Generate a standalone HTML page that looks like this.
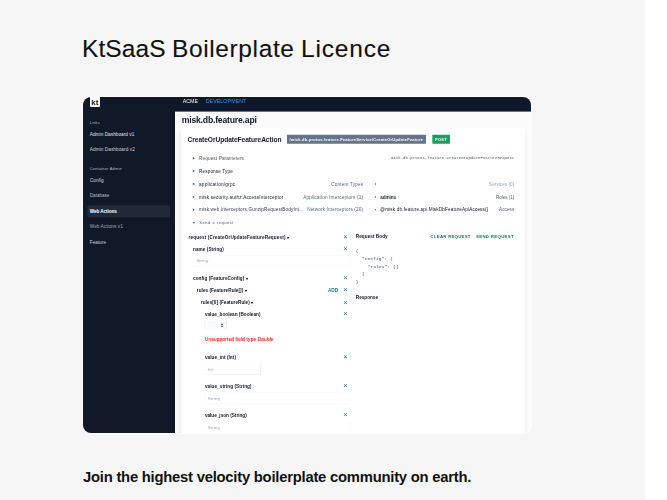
<!DOCTYPE html>
<html><head><meta charset="utf-8"><title>KtSaaS Boilerplate Licence</title>
<style>
html,body{margin:0;padding:0;background:#fff;}
body{width:667px;height:500px;overflow:hidden;position:relative;font-family:"Liberation Sans",sans-serif;}
.page{position:absolute;left:0;top:0;width:645px;height:500px;background:#f6f6f6;}
h1 span{position:absolute;top:0}
h1{position:absolute;left:0;top:33px;width:600px;height:32px;margin:0;font-size:24.5px;line-height:32px;font-weight:400;color:#111;white-space:nowrap;-webkit-text-stroke:0.12px #111;}
h2{position:absolute;left:83px;top:467px;margin:0;font-size:14.8px;line-height:20px;font-weight:700;color:#111;white-space:nowrap;letter-spacing:-0.23px;}
.shot{position:absolute;left:83px;top:97px;width:448px;height:336px;border-radius:8px;overflow:hidden;background:#fbfbfc;box-shadow:0 0 0 1px rgba(255,255,255,.75);}
.in{position:absolute;left:0;top:0;width:1344px;height:1008px;transform:scale(0.333333);transform-origin:0 0;}
.in *{position:absolute;box-sizing:border-box;}
.t{white-space:pre;line-height:20px;height:20px;}
.m{font-family:"Liberation Mono",monospace;}
.side{left:0;top:0;width:276px;height:1008px;background:#111827;}
.top{left:276px;top:0;width:1068px;height:42px;background:#111827;}
.bl{left:276px;top:42px;width:1068px;height:3px;background:#2f7df6;}
.logo{left:21px;top:-4px;width:30px;height:34px;background:#fff;border-radius:3px;}
.sel{left:13px;top:324px;width:248px;height:37px;border-radius:7px;background:#1f2937;}
.card{left:293px;top:93px;width:1033px;height:940px;background:#fff;border-radius:8px;box-shadow:0 10px 15px -3px rgba(0,0,0,.13),0 4px 6px -4px rgba(0,0,0,.1),0 0 2px rgba(0,0,0,.04);}
.bdg{border-radius:2px;}
.inp{background:#fff;border:1.5px solid #f2f3f5;border-bottom-color:#e0e2e7;border-radius:4px;box-shadow:0 1px 2px rgba(0,0,0,.04);}
</style></head><body>
<div class="page">
<h1><span style="left:82px;letter-spacing:0.1px">KtSaaS</span><span style="left:172px;letter-spacing:0.62px">Boilerplate</span><span style="left:301px;letter-spacing:0.83px">Licence</span></h1>
<div class="shot"><div class="in">
<div class="side"></div><div class="top"></div><div class="bl"></div>
<div class="logo"></div>
<div class="t" style="left:24.5px;top:4px;font:700 23px/24px 'Liberation Sans',sans-serif;color:#111;letter-spacing:1.3px">kt</div>
<div class="sel"></div>
<div class="card"></div>
<div class="bdg" style="left:611.7px;top:113.4px;width:417px;height:26.4px;background:#64748b"></div>
<div class="bdg" style="left:1047.6px;top:113.4px;width:53.7px;height:26.4px;background:#1a9e62"></div>
<div class="inp" style="left:330px;top:474.9px;width:473.4px;height:33.3px;"></div>
<div class="inp" style="left:363.6px;top:671.1px;width:67.2px;height:26.4px;background:#f8fafc;border-color:#e6e9ee;border-right:2px solid #c9ced6;"></div>
<div class="inp" style="left:363.9px;top:798.6px;width:168.9px;height:34.5px;border-right:2px solid #c9ced6;"></div>
<div class="inp" style="left:363.9px;top:886.2px;width:439.5px;height:34.8px;"></div>
<div class="inp" style="left:363.9px;top:973.8px;width:439.5px;height:43.2px;border-top-color:#cfd3d9;"></div>
<svg style="left:413px;top:677.9px" width="8" height="14" viewBox="0 0 8 14"><path d="M0.5 5.5 L4 1 L7.5 5.5 Z M0.5 8.5 L4 13 L7.5 8.5 Z" fill="#1f2937"/></svg>
<svg style="left:327.5px;top:178.6px" width="8" height="10" viewBox="0 0 8 10"><path d="M1 0.5 L7 5 L1 9.5 Z" fill="#3d5a80"/></svg>
<svg style="left:327.5px;top:217px" width="8" height="10" viewBox="0 0 8 10"><path d="M1 0.5 L7 5 L1 9.5 Z" fill="#3d5a80"/></svg>
<svg style="left:327.5px;top:256px" width="8" height="10" viewBox="0 0 8 10"><path d="M1 0.5 L7 5 L1 9.5 Z" fill="#3d5a80"/></svg>
<svg style="left:327.5px;top:295px" width="8" height="10" viewBox="0 0 8 10"><path d="M1 0.5 L7 5 L1 9.5 Z" fill="#3d5a80"/></svg>
<svg style="left:327.5px;top:333.4px" width="8" height="10" viewBox="0 0 8 10"><path d="M1 0.5 L7 5 L1 9.5 Z" fill="#3d5a80"/></svg>
<svg style="left:327.5px;top:374.6px" width="9" height="6" viewBox="0 0 9 6"><path d="M0.5 0.5 L8.5 0.5 L4.5 5.5 Z" fill="#3d5a80"/></svg>
<svg style="left:874.8px;top:257px" width="6" height="8" viewBox="0 0 6 8"><path d="M0.5 0.5 L5.5 4 L0.5 7.5 Z" fill="#5b7090"/></svg>
<svg style="left:874.8px;top:296px" width="6" height="8" viewBox="0 0 6 8"><path d="M0.5 0.5 L5.5 4 L0.5 7.5 Z" fill="#5b7090"/></svg>
<svg style="left:874.8px;top:334.4px" width="6" height="8" viewBox="0 0 6 8"><path d="M0.5 0.5 L5.5 4 L0.5 7.5 Z" fill="#5b7090"/></svg>
<div class="t" style="left:20.4px;top:66.8px;font-size:12px;color:#b4bac4;letter-spacing:0.46px;">Links</div>
<div class="t" style="left:20.4px;top:101.0px;font-size:14px;color:#e5e7eb;letter-spacing:0.17px;">Admin Dashboard v1</div>
<div class="t" style="left:20.4px;top:147.8px;font-size:14px;color:#d1d5db;letter-spacing:0.24px;">Admin Dashboard v2</div>
<div class="t" style="left:20.4px;top:204.8px;font-size:12px;color:#b4bac4;letter-spacing:0.49px;">Container Admin</div>
<div class="t" style="left:20.4px;top:239.6px;font-size:14px;color:#d1d5db;letter-spacing:0.26px;">Config</div>
<div class="t" style="left:20.4px;top:286.4px;font-size:14px;color:#b6bcc6;letter-spacing:-0.14px;">Database</div>
<div class="t" style="left:20.4px;top:332.6px;font-size:14px;color:#ffffff;font-weight:700;letter-spacing:-0.27px;">Web Actions</div>
<div class="t" style="left:20.4px;top:378.2px;font-size:14px;color:#a3aab5;letter-spacing:0.20px;">Web Actions v1</div>
<div class="t" style="left:20.4px;top:425.0px;font-size:14px;color:#d1d5db;letter-spacing:0.14px;">Feature</div>
<div class="t" style="left:299.1px;top:2.3px;font-size:16px;color:#f3f4f6;letter-spacing:-0.16px;">ACME</div>
<div class="t" style="left:368.1px;top:2.3px;font-size:16px;color:#3b8bf7;letter-spacing:0.11px;">DEVELOPMENT</div>
<div class="t" style="left:296.1px;top:59.6px;font-size:26px;color:#111827;font-weight:700;letter-spacing:-0.63px;">misk.db.feature.api</div>
<div class="t" style="left:313.8px;top:117.5px;font-size:20px;color:#111827;font-weight:700;letter-spacing:-0.24px;">CreateOrUpdateFeatureAction</div>
<div class="t" style="left:619.2px;top:116.6px;font-size:12px;color:#ffffff;font-weight:700;letter-spacing:0.68px;">/misk.db.protos.feature.FeatureService/CreateOrUpdateFeature</div>
<div class="t" style="left:1056.0px;top:116.6px;font-size:12px;color:#ffffff;font-weight:700;letter-spacing:0.68px;">POST</div>
<div class="t" style="left:348.0px;top:173.6px;font-size:14px;color:#4b5563;letter-spacing:0.37px;">Request Parameters</div>
<div class="t m" style="left:924.1px;top:173.6px;font-size:12px;color:#4b5563;letter-spacing:0.05px;">misk.db.protos.feature.CreateOrUpdateFeatureRequest</div>
<div class="t" style="left:348.0px;top:212.0px;font-size:14px;color:#111827;letter-spacing:0.38px;">Response Type</div>
<div class="t" style="left:348.0px;top:251.0px;font-size:14px;color:#111827;letter-spacing:0.68px;">application/grpc</div>
<div class="t" style="left:744.5px;top:251.0px;font-size:14px;color:#56677d;letter-spacing:0.46px;">Content Types</div>
<div class="t" style="left:1218.1px;top:251.0px;font-size:14px;color:#94a3b8;letter-spacing:0.10px;">Services (0)</div>
<div class="t" style="left:348.0px;top:290.0px;font-size:14px;color:#111827;letter-spacing:0.53px;">misk.security.authz.AccessInterceptor</div>
<div class="t" style="left:660.5px;top:290.0px;font-size:14px;color:#56677d;letter-spacing:0.45px;">Application Interceptors (1)</div>
<div class="t" style="left:891.9px;top:290.0px;font-size:14px;color:#1f2937;font-weight:700;letter-spacing:-0.32px;">admins</div>
<div class="t" style="left:1238.8px;top:290.0px;font-size:14px;color:#56677d;letter-spacing:-0.21px;">Roles (1)</div>
<div class="t" style="left:348.0px;top:328.4px;font-size:14px;color:#374151;letter-spacing:0.41px;">misk.web.interceptors.GunzipRequestBodyInt…</div>
<div class="t" style="left:672.4px;top:328.4px;font-size:14px;color:#56677d;letter-spacing:0.40px;">Network Interceptors (20)</div>
<div class="t" style="left:891.9px;top:328.4px;font-size:14px;color:#111827;letter-spacing:0.41px;">@misk.db.feature.api.MiskDbFeatureApiAccess()</div>
<div class="t" style="left:1248.1px;top:328.4px;font-size:14px;color:#56677d;letter-spacing:0.13px;">Access</div>
<div class="t" style="left:348.6px;top:367.4px;font-size:12px;color:#4b5563;letter-spacing:1.62px;">Send a request</div>
<div class="t" style="left:316.8px;top:409.7px;font-size:14px;color:#111827;font-weight:700;letter-spacing:0.37px;">request (CreateOrUpdateFeatureRequest) <i style="position:static;font-style:normal;font-size:13px;vertical-align:0px;letter-spacing:0">▾</i></div>
<div class="t" style="left:330.0px;top:446.0px;font-size:14px;color:#111827;font-weight:700;letter-spacing:0.17px;">name (String)</div>
<div class="t" style="left:339.6px;top:482.0px;font-size:13px;color:#9ca3af;letter-spacing:0.49px;">String</div>
<div class="t" style="left:330.0px;top:533.6px;font-size:14px;color:#111827;font-weight:700;letter-spacing:0.17px;">config (FeatureConfig) <i style="position:static;font-style:normal;font-size:13px;vertical-align:0px;letter-spacing:0">▾</i></div>
<div class="t" style="left:341.4px;top:570.2px;font-size:14px;color:#111827;font-weight:700;letter-spacing:0.12px;">rules (FeatureRule[]) <i style="position:static;font-style:normal;font-size:13px;vertical-align:0px;letter-spacing:0">▾</i></div>
<div class="t" style="left:735.0px;top:570.2px;font-size:14px;color:#1f72b4;font-weight:700;letter-spacing:-0.11px;">ADD</div>
<div class="t" style="left:354.0px;top:607.4px;font-size:14px;color:#111827;font-weight:700;letter-spacing:0.08px;">rules[0] (FeatureRule) <i style="position:static;font-style:normal;font-size:13px;vertical-align:0px;letter-spacing:0">▾</i></div>
<div class="t" style="left:365.7px;top:641.9px;font-size:14px;color:#111827;font-weight:700;letter-spacing:0.05px;">value_boolean (Boolean)</div>
<div class="t" style="left:366.0px;top:715.7px;font-size:14px;color:#f50f0f;letter-spacing:0.62px;-webkit-text-stroke:0.3px #f50f0f;">Unsupported field type Double</div>
<div class="t" style="left:365.7px;top:770.0px;font-size:14px;color:#111827;font-weight:700;letter-spacing:0.15px;">value_int (Int)</div>
<div class="t" style="left:374.4px;top:806.9px;font-size:13px;color:#9ca3af;letter-spacing:0.38px;">Int</div>
<div class="t" style="left:365.7px;top:857.6px;font-size:14px;color:#111827;font-weight:700;letter-spacing:0.19px;">value_string (String)</div>
<div class="t" style="left:374.4px;top:894.2px;font-size:13px;color:#9ca3af;letter-spacing:0.49px;">String</div>
<div class="t" style="left:365.7px;top:945.2px;font-size:14px;color:#111827;font-weight:700;letter-spacing:-0.03px;">value_json (String)</div>
<div class="t" style="left:374.4px;top:982.1px;font-size:13px;color:#9ca3af;letter-spacing:0.49px;">String</div>
<div class="t" style="left:780.8px;top:407.8px;font-size:22px;color:#1f72b4;">×</div>
<div class="t" style="left:780.8px;top:445.0px;font-size:22px;color:#1f72b4;">×</div>
<div class="t" style="left:780.8px;top:532.6px;font-size:22px;color:#1f72b4;">×</div>
<div class="t" style="left:780.8px;top:569.2px;font-size:22px;color:#1f72b4;">×</div>
<div class="t" style="left:780.8px;top:606.4px;font-size:22px;color:#1f72b4;">×</div>
<div class="t" style="left:780.8px;top:640.9px;font-size:22px;color:#1f72b4;">×</div>
<div class="t" style="left:780.8px;top:769.0px;font-size:22px;color:#1f72b4;">×</div>
<div class="t" style="left:780.8px;top:856.6px;font-size:22px;color:#1f72b4;">×</div>
<div class="t" style="left:780.8px;top:944.2px;font-size:22px;color:#1f72b4;">×</div>
<div class="t" style="left:818.4px;top:408.5px;font-size:14px;color:#111827;font-weight:700;letter-spacing:0.13px;">Request Body</div>
<div class="t" style="left:1042.8px;top:408.5px;font-size:13px;color:#0a7d55;font-weight:700;letter-spacing:0.70px;">CLEAR REQUEST</div>
<div class="t" style="left:1179.0px;top:408.5px;font-size:13px;color:#0a7d55;font-weight:700;letter-spacing:0.95px;">SEND REQUEST</div>
<div class="t" style="left:818.4px;top:590.0px;font-size:14px;color:#111827;font-weight:700;letter-spacing:-0.04px;">Response</div>
<div class="t m" style="left:818.4px;top:451.1px;font-size:13px;color:#414b5a;letter-spacing:0.6px;">{</div>
<div class="t m" style="left:837.0px;top:474.8px;font-size:13px;color:#414b5a;letter-spacing:0.6px;">"config": {</div>
<div class="t m" style="left:854.4px;top:498.5px;font-size:13px;color:#414b5a;letter-spacing:0.6px;">"rules": []</div>
<div class="t m" style="left:837.0px;top:521.6px;font-size:13px;color:#414b5a;letter-spacing:0.6px;">}</div>
<div class="t m" style="left:818.4px;top:545.0px;font-size:13px;color:#414b5a;letter-spacing:0.6px;">}</div>
</div></div>
<h2>Join the highest velocity boilerplate community on earth.</h2>
</div>
</body></html>
